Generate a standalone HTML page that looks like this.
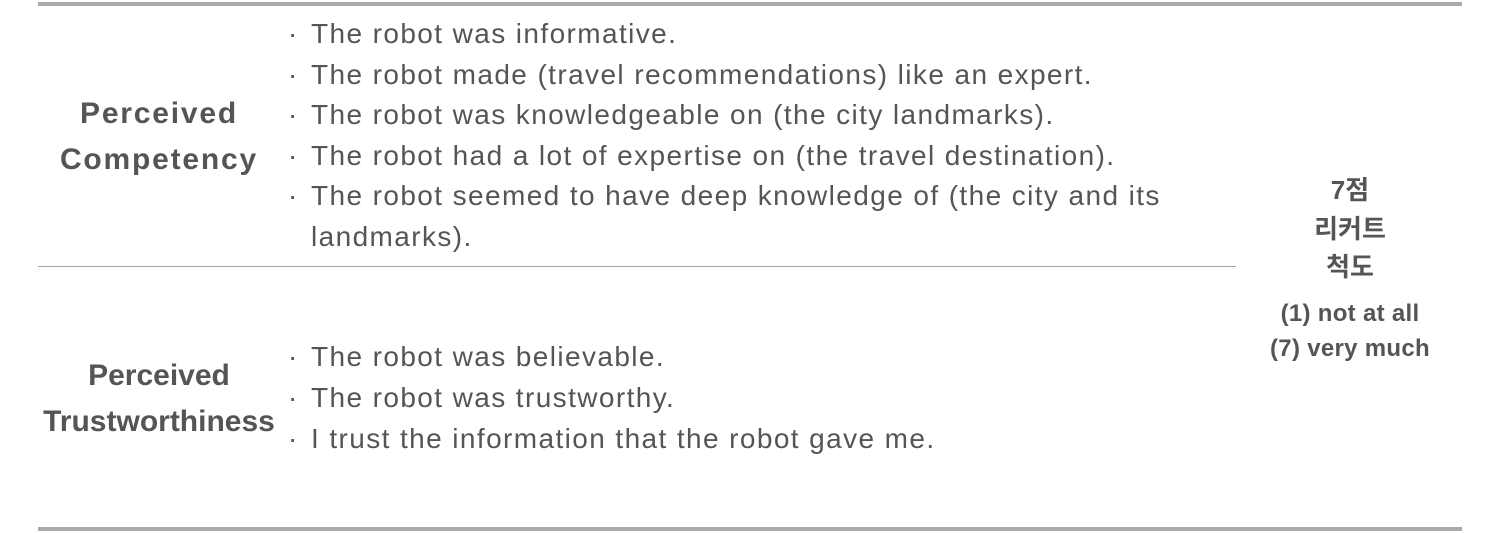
<!DOCTYPE html>
<html><head><meta charset="utf-8"><style>
body{margin:0;width:1500px;height:533px;background:#fff;position:relative;overflow:hidden;font-family:"Liberation Sans","Noto Sans CJK KR",sans-serif;color:#555}
.l{position:absolute;height:0}
.t{position:absolute;left:288px;font-size:28px;letter-spacing:1.4px;white-space:nowrap;line-height:30px}
.t b{font-weight:normal;display:inline-block;width:23px;letter-spacing:0}
.h{position:absolute;width:260px;left:29px;text-align:center;font-weight:bold;font-size:30px;line-height:46px}
.r{position:absolute;left:1250px;width:200px;text-align:center;font-weight:bold}
</style></head><body>
<div class="l" style="left:38px;width:1424px;top:2px;border-top:4px solid #aaa"></div>
<div class="l" style="left:38px;width:1198px;top:266px;border-top:1.5px solid #a5a5a5"></div>
<div class="l" style="left:38px;width:1424px;top:527px;border-top:4px solid #aaa"></div>

<div class="h" style="top:91px;letter-spacing:1.8px">Perceived<br>Competency</div>
<div class="h" style="top:353px">Perceived<br>Trustworthiness</div>

<div class="t" style="top:19px"><b>·</b>The robot was informative.</div>
<div class="t" style="top:60px"><b>·</b>The robot made (travel recommendations) like an expert.</div>
<div class="t" style="top:100px"><b>·</b>The robot was knowledgeable on (the city landmarks).</div>
<div class="t" style="top:141px"><b>·</b>The robot had a lot of expertise on (the travel destination).</div>
<div class="t" style="top:181px"><b>·</b>The robot seemed to have deep knowledge of (the city and its</div>
<div class="t" style="top:222px"><b></b>landmarks).</div>

<div class="t" style="top:342px"><b>·</b>The robot was believable.</div>
<div class="t" style="top:383px"><b>·</b>The robot was trustworthy.</div>
<div class="t" style="top:424px"><b>·</b>I trust the information that the robot gave me.</div>

<div class="r" style="top:171px;font-size:26px;line-height:38.5px">7점<br>리커트<br>척도</div>
<div class="r" style="top:296px;font-size:24px;letter-spacing:0.3px;line-height:35px">(1) not at all<br>(7) very much</div>
</body></html>
